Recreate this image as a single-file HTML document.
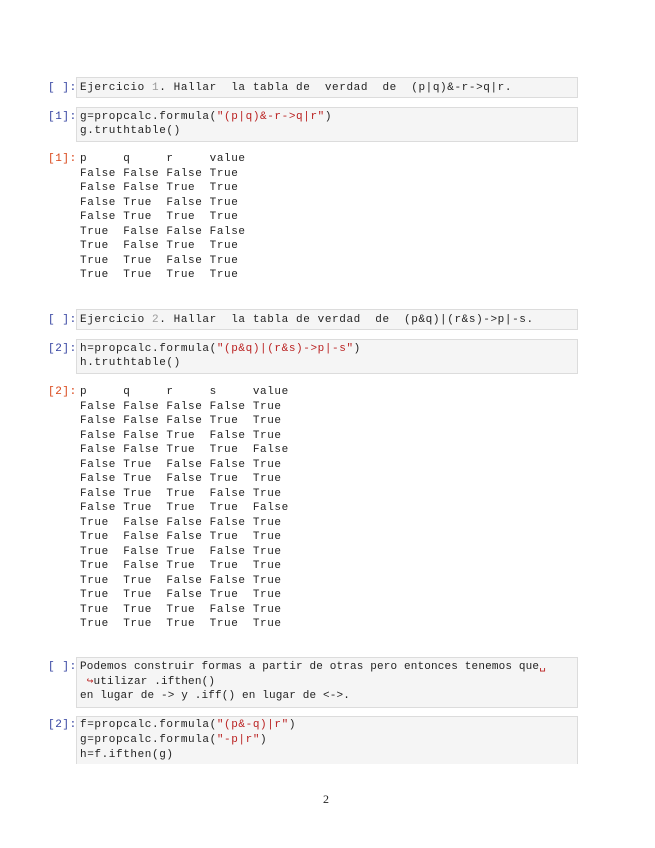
<!DOCTYPE html>
<html><head><meta charset="utf-8"><style>
body{margin:0;width:655px;height:848px;background:#fff;position:relative;overflow:hidden;font-family:"Liberation Mono",monospace;font-size:11px;letter-spacing:0.6px;color:#222}
.l{position:absolute;white-space:pre;line-height:14px;left:80px}
.p{position:absolute;white-space:pre;line-height:14px;left:48px;color:#303f9f}
.o{color:#d84315}
.box{position:absolute;left:76px;width:502px;background:#f5f5f5;border:1px solid #dcdcdc;box-sizing:border-box}
.s{color:#ba2121}
</style></head><body>
<div class="box" style="top:77px;height:21px"></div>
<div class="p" style="top:81px">[ ]:</div>
<div class="l" style="top:81px">Ejercicio <span style="color:#999">1</span>. Hallar  la tabla de  verdad  de  (p|q)&amp;-r-&gt;q|r.</div>

<div class="box" style="top:107px;height:35px"></div>
<div class="p" style="top:110px">[1]:</div>
<div class="l" style="top:110px">g=propcalc.formula(<span class="s">"(p|q)&amp;-r-&gt;q|r"</span>)
g.truthtable()</div>

<div class="p o" style="top:152px">[1]:</div>
<div class="l" style="top:152px;line-height:14.5px">p     q     r     value
False False False True
False False True  True
False True  False True
False True  True  True
True  False False False
True  False True  True
True  True  False True
True  True  True  True</div>

<div class="box" style="top:309px;height:21px"></div>
<div class="p" style="top:313px">[ ]:</div>
<div class="l" style="top:313px">Ejercicio <span style="color:#999">2</span>. Hallar  la tabla de verdad  de  (p&amp;q)|(r&amp;s)-&gt;p|-s.</div>

<div class="box" style="top:339px;height:35px"></div>
<div class="p" style="top:342px">[2]:</div>
<div class="l" style="top:342px">h=propcalc.formula(<span class="s">"(p&amp;q)|(r&amp;s)-&gt;p|-s"</span>)
h.truthtable()</div>

<div class="p o" style="top:385px">[2]:</div>
<div class="l" style="top:385px;line-height:14.5px">p     q     r     s     value
False False False False True
False False False True  True
False False True  False True
False False True  True  False
False True  False False True
False True  False True  True
False True  True  False True
False True  True  True  False
True  False False False True
True  False False True  True
True  False True  False True
True  False True  True  True
True  True  False False True
True  True  False True  True
True  True  True  False True
True  True  True  True  True</div>

<div class="box" style="top:657px;height:51px"></div>
<div class="p" style="top:660px">[ ]:</div>
<div class="l" style="top:660px;line-height:14.5px;letter-spacing:0.15px">Podemos construir formas a partir de otras pero entonces tenemos que<span class="s">␣</span>
 <span class="s">↪</span>utilizar .ifthen()
en lugar de -&gt; y .iff() en lugar de &lt;-&gt;.</div>

<div class="box" style="top:716px;height:48px;border-bottom:none"></div>
<div class="p" style="top:718px">[2]:</div>
<div class="l" style="top:718px;line-height:15px">f=propcalc.formula(<span class="s">"(p&amp;-q)|r"</span>)
g=propcalc.formula(<span class="s">"-p|r"</span>)
h=f.ifthen(g)</div>

<div style="position:absolute;top:792px;left:323px;font-family:'Liberation Serif',serif;font-size:12px;letter-spacing:0">2</div>
</body></html>
